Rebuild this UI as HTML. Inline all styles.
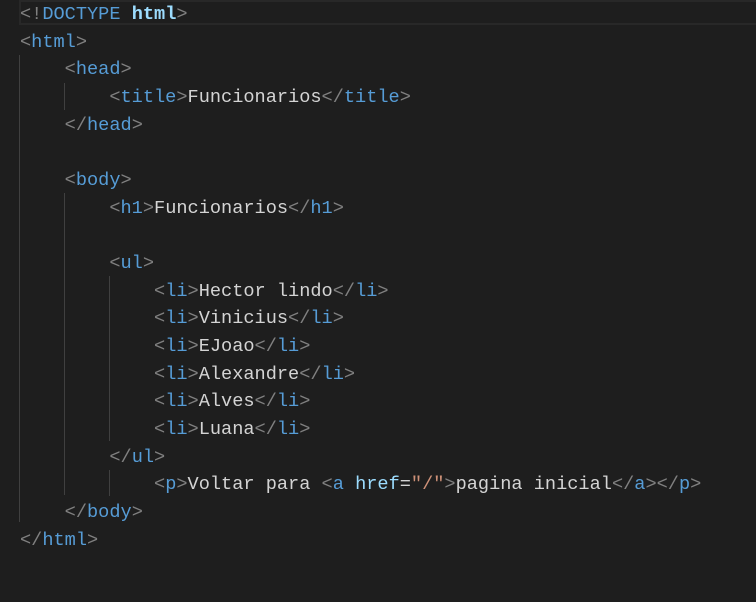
<!DOCTYPE html>
<html><head><style>
body{margin:0;width:756px;height:602px;background:#1e1e1e;overflow:hidden;position:relative;font-family:"Liberation Mono",monospace;font-size:18.63px;}
.cur{position:absolute;left:19px;right:-2px;top:0;height:25px;border:2px solid #282828;box-sizing:border-box;}
.l{position:absolute;left:20px;height:27.6px;line-height:27.6px;white-space:pre;color:#d4d4d4;margin-top:2px;}
.g{position:absolute;width:1px;background:#404040;}
.b{color:#808080}.t{color:#569cd6}.a{color:#9cdcfe}.s{color:#ce9178}
</style></head><body>
<div class="cur"></div>
<div class="g" style="left:19px;top:55px;height:467px"></div>
<div class="g" style="left:64px;top:83px;height:27px"></div>
<div class="g" style="left:64px;top:193px;height:302px"></div>
<div class="g" style="left:109px;top:276px;height:165px"></div>
<div class="g" style="left:109px;top:470px;height:26px"></div>
<div class="l" style="top:-1px"><span class="b">&lt;!</span><span class="t">DOCTYPE</span> <span class="a" style="font-weight:bold">html</span><span class="b">&gt;</span></div>
<div class="l" style="top:27px"><span class="b">&lt;</span><span class="t">html</span><span class="b">&gt;</span></div>
<div class="l" style="top:54px">    <span class="b">&lt;</span><span class="t">head</span><span class="b">&gt;</span></div>
<div class="l" style="top:82px">        <span class="b">&lt;</span><span class="t">title</span><span class="b">&gt;</span>Funcionarios<span class="b">&lt;/</span><span class="t">title</span><span class="b">&gt;</span></div>
<div class="l" style="top:110px">    <span class="b">&lt;/</span><span class="t">head</span><span class="b">&gt;</span></div>
<div class="l" style="top:165px">    <span class="b">&lt;</span><span class="t">body</span><span class="b">&gt;</span></div>
<div class="l" style="top:193px">        <span class="b">&lt;</span><span class="t">h1</span><span class="b">&gt;</span>Funcionarios<span class="b">&lt;/</span><span class="t">h1</span><span class="b">&gt;</span></div>
<div class="l" style="top:248px">        <span class="b">&lt;</span><span class="t">ul</span><span class="b">&gt;</span></div>
<div class="l" style="top:276px">            <span class="b">&lt;</span><span class="t">li</span><span class="b">&gt;</span>Hector lindo<span class="b">&lt;/</span><span class="t">li</span><span class="b">&gt;</span></div>
<div class="l" style="top:303px">            <span class="b">&lt;</span><span class="t">li</span><span class="b">&gt;</span>Vinicius<span class="b">&lt;/</span><span class="t">li</span><span class="b">&gt;</span></div>
<div class="l" style="top:331px">            <span class="b">&lt;</span><span class="t">li</span><span class="b">&gt;</span>EJoao<span class="b">&lt;/</span><span class="t">li</span><span class="b">&gt;</span></div>
<div class="l" style="top:359px">            <span class="b">&lt;</span><span class="t">li</span><span class="b">&gt;</span>Alexandre<span class="b">&lt;/</span><span class="t">li</span><span class="b">&gt;</span></div>
<div class="l" style="top:386px">            <span class="b">&lt;</span><span class="t">li</span><span class="b">&gt;</span>Alves<span class="b">&lt;/</span><span class="t">li</span><span class="b">&gt;</span></div>
<div class="l" style="top:414px">            <span class="b">&lt;</span><span class="t">li</span><span class="b">&gt;</span>Luana<span class="b">&lt;/</span><span class="t">li</span><span class="b">&gt;</span></div>
<div class="l" style="top:442px">        <span class="b">&lt;/</span><span class="t">ul</span><span class="b">&gt;</span></div>
<div class="l" style="top:469px">            <span class="b">&lt;</span><span class="t">p</span><span class="b">&gt;</span>Voltar para <span class="b">&lt;</span><span class="t">a</span> <span class="a">href</span>=<span class="s">"/"</span><span class="b">&gt;</span>pagina inicial<span class="b">&lt;/</span><span class="t">a</span><span class="b">&gt;&lt;/</span><span class="t">p</span><span class="b">&gt;</span></div>
<div class="l" style="top:497px">    <span class="b">&lt;/</span><span class="t">body</span><span class="b">&gt;</span></div>
<div class="l" style="top:525px"><span class="b">&lt;/</span><span class="t">html</span><span class="b">&gt;</span></div>
</body></html>
